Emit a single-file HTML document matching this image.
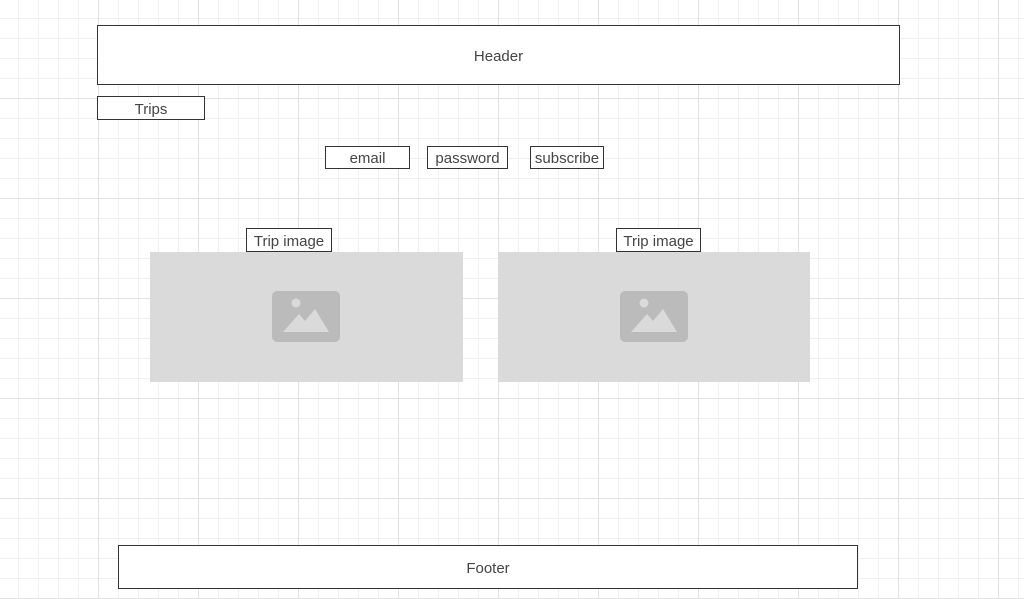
<!DOCTYPE html>
<html><head><style>
body{margin:0;width:1024px;height:599px;overflow:hidden;background:#fff;position:relative;font-family:"Liberation Sans",sans-serif;color:#333;
background-image:linear-gradient(90deg,#e2e2e2 1px,transparent 1px),linear-gradient(#e2e2e2 1px,transparent 1px),linear-gradient(90deg,#f0f0f0 1px,transparent 1px),linear-gradient(#f0f0f0 1px,transparent 1px);
background-size:100px 100px,100px 100px,20px 20px,20px 20px;
background-position:98px 98px,98px 98px,18px 18px,18px 18px;}
.b{position:absolute;box-sizing:border-box;border:1px solid #333;background:#fff;display:flex;align-items:center;justify-content:center;font-size:15px;color:#444;padding-top:2px}
.ph{position:absolute;background:#dadada}
</style></head><body>
<div class="b" style="left:97px;top:25px;width:803px;height:60px">Header</div>
<div class="b" style="left:97px;top:96px;width:108px;height:24px">Trips</div>
<div class="b" style="left:325px;top:146px;width:85px;height:23px">email</div>
<div class="b" style="left:427px;top:146px;width:81px;height:23px">password</div>
<div class="b" style="left:530px;top:146px;width:74px;height:23px">subscribe</div>
<div class="b" style="left:246px;top:228px;width:86px;height:24px">Trip image</div>
<div class="b" style="left:616px;top:228px;width:85px;height:24px">Trip image</div>
<div class="ph" style="left:150px;top:252px;width:313px;height:130px"></div>
<div class="ph" style="left:498px;top:252px;width:312px;height:130px"></div>
<svg style="position:absolute;left:272px;top:291px" width="68" height="51"><rect width="68" height="51" rx="5" fill="#bbb"/><circle cx="24" cy="12" r="4.5" fill="#dadada"/><path d="M11 41 L27 23 L33 30 L43 18 L57 41 Z" fill="#dadada"/></svg>
<svg style="position:absolute;left:620px;top:291px" width="68" height="51"><rect width="68" height="51" rx="5" fill="#bbb"/><circle cx="24" cy="12" r="4.5" fill="#dadada"/><path d="M11 41 L27 23 L33 30 L43 18 L57 41 Z" fill="#dadada"/></svg>
<div class="b" style="left:118px;top:545px;width:740px;height:44px">Footer</div>
</body></html>
